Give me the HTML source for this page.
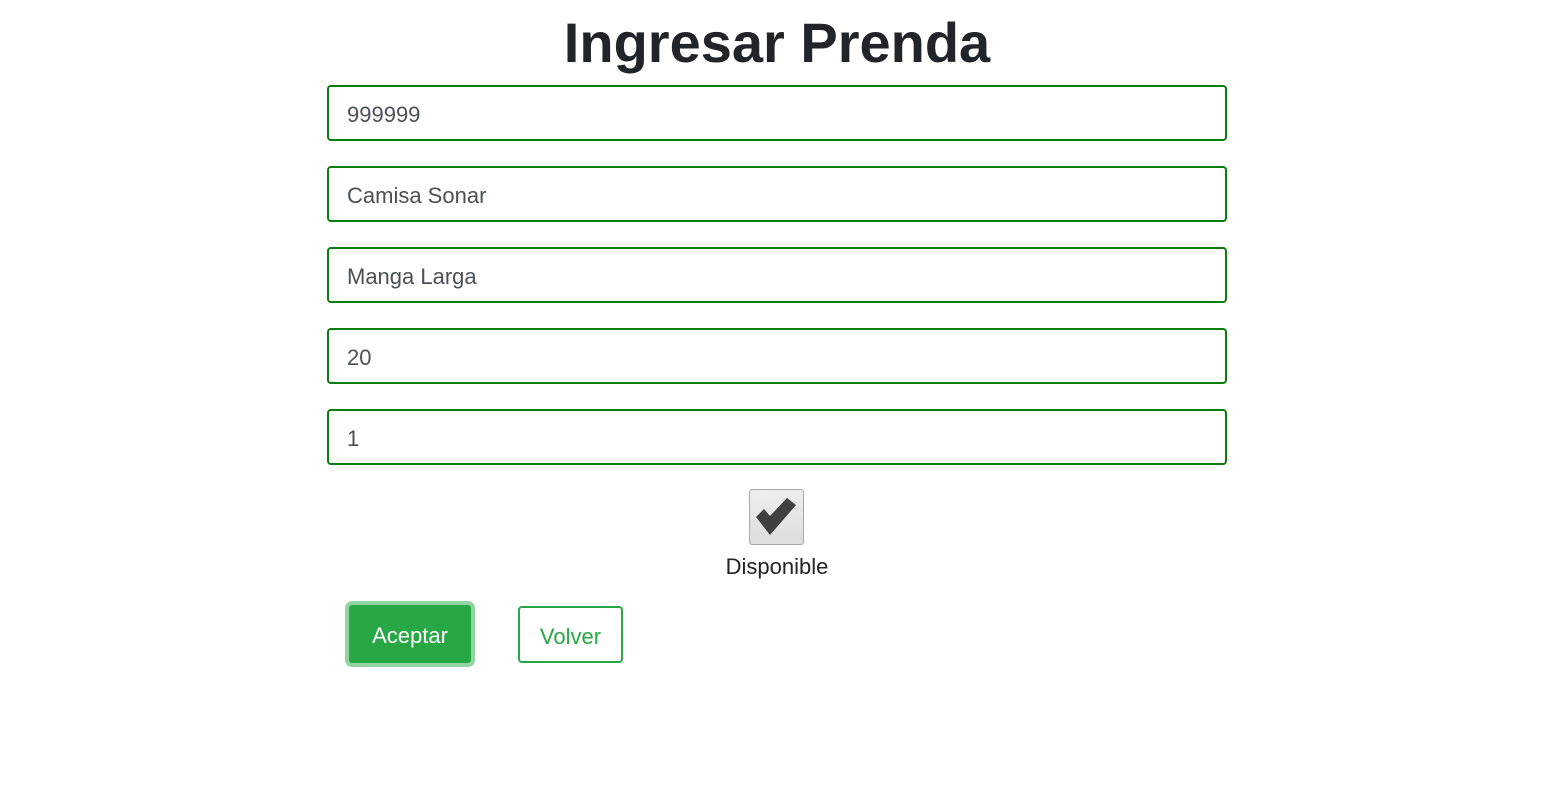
<!DOCTYPE html>
<html><head><style>
body{margin:0;background:#fff;font-family:"Liberation Sans",sans-serif;color:#212529;width:1554px;height:794px;position:relative;overflow:hidden}
h1{position:absolute;top:8px;left:0;width:1554px;text-align:center;margin:0;font-size:56px;font-weight:bold;line-height:70px}
.in{position:absolute;left:327px;height:52px;border:2px solid #0a7d0a;border-radius:4px;font-size:22px;color:#495057;line-height:56px;padding-left:18px;box-sizing:content-box;width:878px}
.cb{position:absolute;left:749px;top:489px;width:53px;height:54px;border:1px solid #aaa;border-radius:3px;background:linear-gradient(#eee,#ddd)}
.lbl{position:absolute;left:0;width:1554px;text-align:center;top:552px;font-size:22px;line-height:30px}
.b1{position:absolute;left:345px;top:601px;height:58px;border:4px solid #94d3a2;border-radius:7px;background:#28a745;color:#fff;font-size:22px;text-align:center;line-height:62px;box-sizing:content-box;width:122px}
.b2{position:absolute;left:518px;top:606px;width:101px;height:53px;border:2px solid #28a745;border-radius:4px;color:#28a745;font-size:22px;text-align:center;line-height:57px}
</style></head><body>
<h1>Ingresar Prenda</h1>
<div class="in" style="top:85px">999999</div>
<div class="in" style="top:166px">Camisa Sonar</div>
<div class="in" style="top:247px">Manga Larga</div>
<div class="in" style="top:328px">20</div>
<div class="in" style="top:409px">1</div>
<div class="cb"><svg width="53" height="54" viewBox="0 0 53 54"><path d="M6 27 L14 19 L20 26 L37 8 L46 15 L20 45 Z" fill="#404040"/></svg></div>
<div class="lbl">Disponible</div>
<div class="b1">Aceptar</div>
<div class="b2">Volver</div>
</body></html>
